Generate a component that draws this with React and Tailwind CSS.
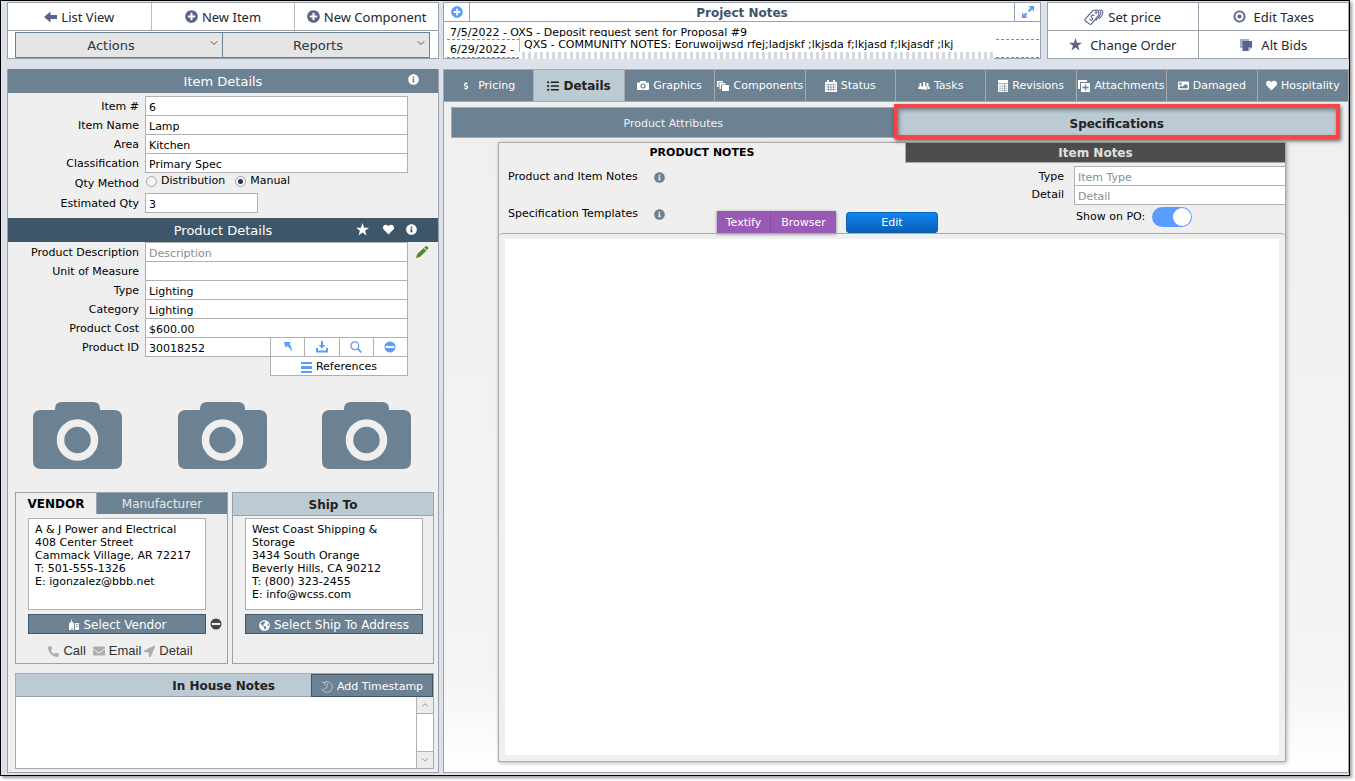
import {
  FaDollarSign,
  FaEnvelope,
  FaGlobeAmericas,
  FaHeart,
  FaImage,
  FaInfoCircle,
  FaListUl,
  FaLocationArrow,
  FaPhoneAlt,
  FaPlusCircle,
} from "react-icons/fa";
import { LuChevronDown, LuChevronUp } from "react-icons/lu";

/* ---------- icons ---------- */

const BackIcon = () => (
  <svg viewBox="0 0 13 12" className="h-3 w-[13px]" fill="#5b628c">
    <path d="M0 6 6.5.5V4H13v4H6.500v3.500z" />
  </svg>
);

const StarIcon = ({ className }) => (
  <svg viewBox="0 0 24 24" className={className} fill="currentColor">
    <path d="M12 0l2.900 8.600H24l-7.300 5.500 2.700 9L12 17.700 4.600 23.100l2.700-9L0 8.600h9.100z" />
  </svg>
);

const MinusIcon = ({ className }) => (
  <svg viewBox="0 0 12 12" className={className} fill="currentColor">
    <path d="M6 .5A5.500 5.500 0 1 1 6 11.500 5.500 5.500 0 0 1 6 .5zM1.800 5v2h8.400V5z" fillRule="evenodd" />
  </svg>
);

const TagsIcon = () => (
  <svg viewBox="0 0 20 18" className="h-[18px] w-5" fill="none" stroke="#5b628c" strokeWidth="1.100" strokeLinejoin="round">
    <path d="M1.200 11.200 8.300 3.100Q9 2.300 10 2.200l3-.2q1.300 0 1.500 1.300l.3 2.600q.1 1-.5 1.800l-6.800 8.200q-.8.900-1.800.2l-4.300-3.100q-1-.8-.2-1.800z" />
    <path d="M14.800 2q1.900.1 2 1.700.2 2.700-1.200 4.300l-3.800 4.600M16.800 1.800q2 .4 2 2 .1 2.600-1.300 4.200l-2.400 2.900" />
    <circle cx="12.200" cy="4.500" r=".8" />
    <path d="M10.200 8q-1.300-1.500-2.500-.6-1 1.100.2 2.200t.2 2.200q-1.200 1-2.500-.6" />
  </svg>
);

const TargetIcon = () => (
  <svg viewBox="0 0 14 14" className="size-[13px]" fill="none">
    <circle cx="7" cy="7" r="5.500" stroke="#5b628c" strokeWidth="2" />
    <circle cx="7" cy="7" r="2.200" fill="#5b628c" />
  </svg>
);

const BidsIcon = () => (
  <svg viewBox="0 0 14 14" className="size-3.5">
    <path d="M1 1h9v9H1z" fill="#a9adc4" />
    <path d="M3.500 3H13v6.500L9.500 13h-6z" fill="#5b628c" />
    <path d="M13 9.500 9.500 13V9.500z" fill="#c5c8d8" />
  </svg>
);

const ExpandIcon = () => (
  <svg viewBox="0 0 14 14" className="size-3.5" fill="#5a9dff">
    <path d="M7.500 1H13v5.500l-1.900-1.900-2.600 2.600-1.700-1.700 2.600-2.600zM6.500 13H1V7.500l1.900 1.900 1.800-1.800 1.700 1.700-1.800 1.800z" />
  </svg>
);

const CameraIcon = () => (
  <svg viewBox="0 0 12 11" className="h-[11px] w-3 shrink-0" fill="currentColor">
    <path d="M3.500 1h5l.7 1.500H11q1 0 1 1V9q0 1-1 1H1Q0 10 0 9V3.500q0-1 1-1h1.800z" />
    <circle cx="6" cy="6" r="2" fill="none" stroke="#6c8192" strokeWidth="1.200" />
  </svg>
);

const UsersIcon = () => (
  <svg viewBox="0 0 12 8" className="h-2 w-3 shrink-0" fill="currentColor">
    <path d="M1.500 1h1.800v3L4.500 5.500V7H0V5.500L1.500 4.500zM5 0h2.200v3.500L9 5v2.500H4V5.500L5 4zM8.500 1h2v3l1.500 1.500V7H9.500V5l-1-1z" />
  </svg>
);

const StackIcon = () => (
  <svg viewBox="0 0 13 12" className="h-3 w-[13px] shrink-0" fill="currentColor">
    <path d="M0 1h6v1.500H1.500V7H0zM2.500 3h6v1.500H4V9H2.500z" />
    <path d="M5 5h7v6H5z" />
  </svg>
);

const CalendarIcon = () => (
  <svg viewBox="0 0 12 12" className="size-3 shrink-0">
    <path d="M0 2h2V0h2v2h4V0h2v2h2v10H0z" fill="currentColor" />
    <path d="M1 4.500h10M1 7h10M1 9.500h10M3.500 4.500V11M6 4.500V11M8.500 4.500V11" stroke="#6c8192" strokeWidth=".6" />
  </svg>
);

const LedgerIcon = () => (
  <svg viewBox="0 0 10 12" className="h-3 w-2.5 shrink-0">
    <path d="M0 0h10v12H0z" fill="currentColor" />
    <path d="M0 3.500h10M1 6h8M1 8.200h8M1 10.400h8M6.500 4v8" stroke="#6c8192" strokeWidth=".6" />
  </svg>
);

const AttachIcon = () => (
  <svg viewBox="0 0 12 12" className="size-3 shrink-0">
    <path d="M0 0h9v2H2v7H0z" fill="currentColor" />
    <path d="M3 3h9v9H3z" fill="currentColor" />
    <path d="M7.500 4.500v6M4.500 7.500h6" stroke="#6c8192" strokeWidth="1.300" />
  </svg>
);

const PencilIcon = () => (
  <svg viewBox="0 0 14 14" className="size-3.5" fill="#4f8a1c">
    <path d="M10.200 1.500q1-.9 2 0l.8.800q.8 1-.1 1.900l-.9.800L9.300 2.400zM8.700 3l2.700 2.700-6.300 6L1 13.200l1.300-4.100z" />
  </svg>
);

const CornerArrowIcon = () => (
  <svg viewBox="0 0 12 12" className="size-3" fill="#5a9dff">
    <path d="M2 1h7L7.500 2.800c1.800 2 2.500 4.700 2.200 8.200C8.800 8.500 7.600 6.700 5.300 5L3.500 6.500z" />
  </svg>
);

const DownloadIcon = () => (
  <svg viewBox="0 0 12 12" className="size-3" fill="#5a9dff">
    <path d="M5 0h2v4h2.500L6 7.500 2.500 4H5zM0 7h2v2.500h8V7h2v4.500H0z" />
  </svg>
);

const SearchIcon = () => (
  <svg viewBox="0 0 12 12" className="size-3" fill="none" stroke="#5a9dff">
    <circle cx="4.800" cy="4.800" r="3.900" strokeWidth="1.300" />
    <path d="m7.800 7.800 3.500 3.500" strokeWidth="1.800" />
  </svg>
);

const BarsIcon = () => (
  <svg viewBox="0 0 11 11" className="size-[11px]" fill="#5a9dff">
    <path d="M0 0h11v2H0zM0 4h11v3H0zM0 9h11v2H0z" />
  </svg>
);

const BuildingIcon = () => (
  <svg viewBox="0 0 12 12" className="size-3" fill="currentColor">
    <path d="M3.500 0v2L6 4.500V11H4.500V9h-1v2H1V4.500L3 2.500V0z" />
    <path d="M7 4h4v7H7zm1 1v1h.8V5zm1.500 0v1h.8V5zM8 7v1h.8V7zm1.500 0v1h.8V7z" fillRule="evenodd" />
  </svg>
);

const ClockIcon = () => (
  <svg viewBox="0 0 12 12" className="size-3" fill="none" stroke="#b9c6cf" strokeWidth="1">
    <path d="M3.500 1.300A5.300 5.300 0 1 1 .9 7.500M6.300 2.500V6L3 8.500M1 1.500h3v3" />
  </svg>
);

const CameraPlaceholder = () => (
  <svg viewBox="0 0 89 67" className="h-[67px] w-[89px]" fill="#6c8192">
    <path d="M8 8h14V7q0-7 7-7h31q7 0 7 7v1h14q8 0 8 8v43q0 8-8 8H8q-8 0-8-8V16q0-8 8-8z" />
    <circle cx="44.500" cy="38" r="17" fill="none" stroke="#efefef" strokeWidth="7.500" />
  </svg>
);

/* ---------- data ---------- */

const tabs = [
  { label: "Pricing", icon: <FaDollarSign className="size-2 shrink-0" />, gap: "gap-2" },
  { label: "Details", icon: <FaListUl className="size-3 shrink-0" />, active: true },
  { label: "Graphics", icon: <CameraIcon /> },
  { label: "Components", icon: <StackIcon /> },
  { label: "Status", icon: <CalendarIcon /> },
  { label: "Tasks", icon: <UsersIcon /> },
  { label: "Revisions", icon: <LedgerIcon /> },
  { label: "Attachments", icon: <AttachIcon /> },
  { label: "Damaged", icon: <FaImage className="size-[11px] shrink-0" /> },
  { label: "Hospitality", icon: <FaHeart className="size-[11px] shrink-0" /> },
];

const itemFields = [
  { id: "item-no", label: "Item #", value: "6" },
  { id: "item-name", label: "Item Name", value: "Lamp" },
  { id: "area", label: "Area", value: "Kitchen" },
  { id: "classification", label: "Classification", value: "Primary Spec" },
];

const productFields = [
  { id: "description", label: "Product Description", value: "", placeholder: "Description" },
  { id: "uom", label: "Unit of Measure", value: "" },
  { id: "type", label: "Type", value: "Lighting" },
  { id: "category", label: "Category", value: "Lighting" },
  { id: "cost", label: "Product Cost", value: "$600.00" },
];

const vendorAddress = `A & J Power and Electrical
408 Center Street
Cammack Village, AR 72217
T: 501-555-1326
E: igonzalez@bbb.net`;

const shipAddress = `West Coast Shipping & Storage
3434 South Orange
Beverly Hills, CA 90212
T: (800) 323-2455
E: info@wcss.com`;

/* ---------- small parts ---------- */

const inputClass =
  "h-5 border border-[#b0b0b0] bg-white px-[3px] pt-0.5 text-[11px] text-black placeholder:text-[#8c8c8c] outline-none";

const FieldRow = ({ id, label, value, placeholder, children }) => (
  <div className="-mb-px flex h-5 items-center">
    <label htmlFor={id} className="w-[131px] shrink-0 pt-0.5 text-right">
      {label}
    </label>
    <input
      id={id}
      defaultValue={value}
      placeholder={placeholder}
      className={`${inputClass} ml-1.5 w-[263px] shrink-0`}
    />
    {children}
  </div>
);

const ToolButton = ({ icon, children }) => (
  <button className="flex items-center justify-center gap-1 bg-white font-['Noto_Sans',sans-serif] text-[13px] text-[#23272e]">
    {icon}
    {children}
  </button>
);

const DropDown = ({ label }) => (
  <div className="relative flex-1">
    <select
      aria-label={label}
      className="h-6 w-full appearance-none bg-[#e5e5e5] pt-0.5 pr-4 text-center text-[13px] text-[#2c3640] outline-none"
    >
      <option>{label}</option>
    </select>
    <LuChevronDown className="pointer-events-none absolute top-1 right-0.5 size-3 text-[#555]" />
  </div>
);

const IconCell = ({ label, children }) => (
  <button
    aria-label={label}
    className="flex h-5 flex-1 items-center justify-center border-y border-r border-[#b0b0b0] bg-white"
  >
    {children}
  </button>
);

/* ---------- sections ---------- */

const LeftToolbar = () => (
  <div className="h-[57px] border border-[#9aa1ab] bg-white">
    <div className="grid h-7 grid-cols-3 gap-px border-b border-[#9aa1ab] bg-[#bcbcbc]">
      <ToolButton icon={<BackIcon />}>List View</ToolButton>
      <ToolButton icon={<FaPlusCircle className="size-[13px] text-[#5b628c]" />}>New Item</ToolButton>
      <ToolButton icon={<FaPlusCircle className="size-[13px] text-[#5b628c]" />}>New Component</ToolButton>
    </div>
    <div className="mt-px mr-2 ml-[7px] flex divide-x divide-[#6c8192] border border-[#6c8192]">
      <DropDown label="Actions" />
      <DropDown label="Reports" />
    </div>
  </div>
);

const ItemDetails = () => (
  <>
    <header className="relative flex h-6 items-center justify-center bg-[#6c8192] pt-0.5 text-[13px] text-white">
      <h2>Item Details</h2>
      <button aria-label="Item details info" className="absolute top-[5px] right-[19px]">
        <FaInfoCircle className="size-[11px]" />
      </button>
    </header>
    <div className="pt-[3px] pb-[5px]">
      {itemFields.map((field) => (
        <FieldRow key={field.id} {...field} />
      ))}
      <fieldset className="mt-px flex h-5 items-center">
        <legend className="float-left w-[131px] pt-0.5 text-right">Qty Method</legend>
        <div className="ml-[7px] flex gap-2.5 pb-1">
          <label className="flex items-center gap-1">
            <input
              type="radio"
              name="qty"
              className="size-[11px] appearance-none rounded-full border border-[#a5a5a5] bg-[#f4f4f4]"
            />
            Distribution
          </label>
          <label className="flex items-center gap-1">
            <input
              type="radio"
              name="qty"
              defaultChecked
              className="size-[11px] appearance-none rounded-full border border-[#a5a5a5] bg-[radial-gradient(circle,#24364b_2px,#f4f4f4_3px)]"
            />
            Manual
          </label>
        </div>
      </fieldset>
      <div className="flex h-5 items-center">
        <label htmlFor="est-qty" className="w-[131px] pt-0.5 text-right">
          Estimated Qty
        </label>
        <input id="est-qty" defaultValue="3" className={`${inputClass} ml-1.5 w-[113px]`} />
      </div>
    </div>
  </>
);

const ProductDetails = () => (
  <>
    <header className="relative flex h-6 items-center justify-center bg-[#3e566a] pt-0.5 text-[13px] text-white">
      <h2>Product Details</h2>
      <div className="absolute top-[5px] right-[21px] flex items-center gap-3">
        <button aria-label="Favorite">
          <StarIcon className="size-[13px]" />
        </button>
        <button aria-label="Like" className="ml-0.5">
          <FaHeart className="size-[11px]" />
        </button>
        <button aria-label="Product details info">
          <FaInfoCircle className="size-[11px]" />
        </button>
      </div>
    </header>
    {productFields.map((field) => (
      <FieldRow key={field.id} {...field}>
        {field.id === "description" && (
          <button aria-label="Edit description" className="ml-[7px]">
            <PencilIcon />
          </button>
        )}
      </FieldRow>
    ))}
    <div className="flex h-5 items-center">
      <label htmlFor="product-id" className="w-[131px] pt-0.5 text-right">
        Product ID
      </label>
      <input id="product-id" defaultValue="30018252" className={`${inputClass} ml-1.5 w-[126px]`} />
      <div className="flex w-[137px]">
        <IconCell label="Go to product">
          <CornerArrowIcon />
        </IconCell>
        <IconCell label="Import product">
          <DownloadIcon />
        </IconCell>
        <IconCell label="Search product">
          <SearchIcon />
        </IconCell>
        <IconCell label="Remove product">
          <MinusIcon className="size-3 text-[#5a9dff]" />
        </IconCell>
      </div>
    </div>
    <button className="-mt-px ml-[262px] flex h-5 w-[138px] items-center justify-center gap-1 border border-[#b0b0b0] bg-white pt-0.5">
      <BarsIcon />
      References
    </button>
  </>
);

const AddressBox = ({ label, value }) => (
  <textarea
    aria-label={label}
    readOnly
    value={value}
    className="block h-[92px] w-[178px] resize-none border border-[#b0b0b0] bg-white px-1.5 pt-1 text-[11px] leading-[13px] outline-none"
  />
);

const Contacts = () => (
  <div className="mt-[23px] flex gap-1 pr-1 pl-[7px]">
    <section className="h-[172px] w-[213px] border border-[#9aa1ab]">
      <div className="flex h-[21px]">
        <button className="w-20 text-[12px] font-bold">VENDOR</button>
        <button className="flex-1 border-l border-[#9aa1ab] bg-[#6c8192] text-[12px] text-[#e4e9ec]">
          Manufacturer
        </button>
      </div>
      <div className="mt-1 ml-3">
        <AddressBox label="Vendor address" value={vendorAddress} />
        <div className="mt-1 flex items-center gap-1">
          <button className="flex h-5 w-[178px] items-center justify-center gap-1 border border-[#3e566a] bg-[#6c8192] pt-0.5 text-[12px] text-white">
            <BuildingIcon />
            Select Vendor
          </button>
          <button aria-label="Clear vendor">
            <MinusIcon className="size-3 text-[#444]" />
          </button>
        </div>
        <div className="mt-2.5 flex justify-center gap-[7px] pr-3.5 font-['Liberation_Sans',Arial,sans-serif] text-[13px] text-[#333]">
          <a href="#call" className="flex items-center gap-1">
            <FaPhoneAlt className="size-[11px] text-[#adadad]" />
            Call
          </a>
          <a href="#email" className="flex items-center gap-1">
            <FaEnvelope className="size-3 text-[#adadad]" />
            Email
          </a>
          <a href="#detail" className="-ml-1 flex items-center gap-1">
            <FaLocationArrow className="size-[11px] text-[#adadad]" />
            Detail
          </a>
        </div>
      </div>
    </section>
    <section className="h-[172px] flex-1 border border-[#9aa1ab]">
      <h3 className="flex h-[23px] items-center justify-center border-b border-[#9aa1ab] bg-[#bccbd3] pt-0.5 text-[12px] font-bold text-[#222]">
        Ship To
      </h3>
      <div className="mt-0.5 ml-3">
        <AddressBox label="Ship to address" value={shipAddress} />
        <button className="mt-1 flex h-5 w-[178px] items-center justify-center gap-1 border border-[#3e566a] bg-[#6c8192] pt-0.5 text-[12px] text-white">
          <FaGlobeAmericas className="size-[11px]" />
          Select Ship To Address
        </button>
      </div>
    </section>
  </div>
);

const InHouseNotes = () => (
  <section className="mt-[9px] mr-1 mb-[3px] ml-[7px] border border-[#aaa]">
    <div className="flex h-[23px] bg-[#bccbd3]">
      <h3 className="flex flex-1 items-center justify-end border-b border-[#9aa1ab] pt-0.5 pr-9 text-[12px] font-bold text-[#222]">
        In House Notes
      </h3>
      <button className="flex w-[122px] items-center justify-center gap-1 border border-[#3e566a] bg-[#6c8192] pt-0.5 text-[11px] text-white">
        <ClockIcon />
        Add Timestamp
      </button>
    </div>
    <div className="flex h-[71px] bg-white">
      <textarea aria-label="In House Notes" className="flex-1 resize-none p-1 outline-none" />
      <div className="flex w-[17px] flex-col justify-between border-l border-[#b0b0b0]">
        <button aria-label="Scroll up" className="flex h-[17px] items-center justify-center border-b border-[#b0b0b0] bg-[#ececec]">
          <LuChevronUp className="size-2.5 text-[#888]" />
        </button>
        <button aria-label="Scroll down" className="flex h-[17px] items-center justify-center border-t border-[#b0b0b0] bg-[#ececec]">
          <LuChevronDown className="size-2.5 text-[#888]" />
        </button>
      </div>
    </div>
  </section>
);

const ProjectNotes = () => (
  <section className="relative h-[57px] flex-1 border border-[#9aa1ab] bg-white text-[11px]">
    <div className="flex h-[19px] border-b border-[#9aa1ab]">
      <button aria-label="Add note" className="flex w-[26px] items-center justify-center border-r border-[#9aa1ab]">
        <FaPlusCircle className="size-3 text-[#5a9dff]" />
      </button>
      <h2 className="flex flex-1 items-center justify-center pt-0.5 text-[12px] font-bold text-[#3e566a]">
        Project Notes
      </h2>
      <button aria-label="Expand notes" className="flex w-[26px] items-center justify-center border-l border-[#9aa1ab]">
        <ExpandIcon />
      </button>
    </div>
    <p className="mr-px ml-[3px] h-[18px] overflow-hidden border-b border-dashed border-[#888] pt-1 pl-[3px] leading-[14px]">
      7/5/2022 - OXS - Deposit request sent for Proposal #9
    </p>
    <p className="mr-px ml-[3px] h-[18px] overflow-hidden border-b border-dashed border-[#888] pl-[3px] leading-5">
      6/29/2022 -
    </p>
    {/* note preview floating above the list */}
    <div className="absolute top-[34px] right-[46px] left-[75px]">
      <p className="h-[15px] overflow-hidden border-l border-[#bbb] bg-white pl-1 leading-[15px] whitespace-nowrap">
        QXS - COMMUNITY NOTES: Eoruwoijwsd rfej;ladjskf ;lkjsda f;lkjasd f;lkjasdf ;lkj
      </p>
      <div className="h-[7px] bg-[repeating-linear-gradient(90deg,#fff_0_3px,#d5d8df_3px_6px)]" />
    </div>
  </section>
);

const ActionGrid = () => (
  <div className="grid h-[57px] w-[302px] grid-cols-2 grid-rows-2 gap-px border border-[#9aa1ab] bg-[#9aa1ab]">
    <ToolButton icon={<TagsIcon />}>Set price</ToolButton>
    <ToolButton icon={<TargetIcon />}>
      <span className="ml-1">Edit Taxes</span>
    </ToolButton>
    <ToolButton icon={<StarIcon className="size-[13px] text-[#5b628c]" />}>
      <span className="ml-1">Change Order</span>
    </ToolButton>
    <ToolButton icon={<BidsIcon />}>
      <span className="ml-1">Alt Bids</span>
    </ToolButton>
  </div>
);

const TabBar = () => (
  <nav className="grid h-[33px] grid-cols-10 divide-x divide-[#aaa] border border-[#aaa]">
    {tabs.map((tab) => (
      <button
        key={tab.label}
        className={`flex min-w-0 items-center justify-center whitespace-nowrap ${tab.gap ?? "gap-1"} ${
          tab.active ? "bg-[#bccbd3] text-[12px] font-bold text-[#222]" : "bg-[#6c8192] text-[11px] text-white"
        }`}
      >
        {tab.icon}
        {tab.label}
      </button>
    ))}
  </nav>
);

const NotesCard = () => (
  <section className="mt-1 mr-[62px] mb-2.5 ml-[54px] flex flex-1 flex-col border border-[#aaa] bg-[#efefef] shadow-[1px_1px_4px_rgba(0,0,0,0.3)]">
    <div className="flex h-[90px]">
      <div className="flex flex-1 flex-col">
        <h3 className="mt-[3px] text-center text-[11px] leading-[14px] font-bold">PRODUCT NOTES</h3>
        <div className="mt-2.5 ml-[9px] flex items-center gap-4">
          Product and Item Notes
          <FaInfoCircle className="size-[11px] text-[#6c8192]" />
        </div>
        <div className="mt-auto flex items-end">
          <div className="mb-3 ml-[9px] flex items-center gap-4">
            Specification Templates
            <FaInfoCircle className="size-[11px] text-[#6c8192]" />
          </div>
          <div className="ml-auto flex h-[22px] divide-x divide-[#8a4ba6] bg-[#9b59b6] pt-px text-[11px] text-white shadow-[0_1px_3px_rgba(0,0,0,0.5)]">
            <button className="w-[54px]">Textify</button>
            <button className="w-[65px]">Browser</button>
          </div>
          <button className="mr-[-33px] ml-2.5 h-[21px] w-[92px] rounded-[3px] border border-[#0a5fb0] bg-linear-to-b from-[#0f85f5] to-[#0a60b3] text-[11px] text-white">
            Edit
          </button>
        </div>
      </div>
      <div className="w-[380px]">
        <h3 className="flex h-5 items-center justify-center border-b border-l border-[#aaa] bg-[#4d4d4d] text-[12px] font-bold text-[#e0e0e0]">
          Item Notes
        </h3>
        <div className="mt-[3px] flex h-5 items-center">
          <label htmlFor="note-type" className="w-[159px] pt-0.5 text-right">
            Type
          </label>
          <input id="note-type" placeholder="Item Type" className={`${inputClass} ml-2.5 min-w-0 flex-1 border-r-0`} />
        </div>
        <div className="-mt-px flex h-5 items-center">
          <label htmlFor="note-detail" className="w-[159px] text-right">
            Detail
          </label>
          <input id="note-detail" placeholder="Detail" className={`${inputClass} ml-2.5 min-w-0 flex-1 border-r-0`} />
        </div>
        <label className="mt-0.5 ml-[171px] flex items-center gap-[7px]">
          Show on PO:
          <input
            type="checkbox"
            defaultChecked
            className="relative h-5 w-10 appearance-none rounded-full bg-[#5a9dff] before:absolute before:top-px before:right-px before:size-[18px] before:rounded-full before:bg-white"
          />
        </label>
      </div>
    </div>
    <div className="flex flex-1 rounded-t-sm border-t border-[#aaa] px-1.5 pt-[5px] pb-1.5">
      <textarea aria-label="Product notes" className="flex-1 resize-none bg-white p-2 outline-none" />
    </div>
  </section>
);

export default function App() {
  return (
    <div className="pr-[5px] pb-1 font-['DejaVu_Sans',Verdana,sans-serif] text-[11px] leading-[14px] text-black">
      <div className="flex gap-1 border border-black bg-[#dde2ea] pt-px pb-0.5 pl-1.5 shadow-[2px_2px_3px_rgba(0,0,0,0.4)]">
        <aside className="flex w-[432px] shrink-0 flex-col gap-2.5">
          <LeftToolbar />
          <div className="border-x border-b border-[#9aa1ab] bg-[#efefef]">
            <ItemDetails />
            <ProductDetails />
            <div className="mt-[26px] flex justify-between pr-[27px] pl-[25px]">
              <CameraPlaceholder />
              <CameraPlaceholder />
              <CameraPlaceholder />
            </div>
            <Contacts />
            <InHouseNotes />
          </div>
        </aside>
        <main className="flex min-w-0 flex-1 flex-col">
          <div className="mb-2.5 flex gap-1.5">
            <ProjectNotes />
            <ActionGrid />
          </div>
          <TabBar />
          <div className="flex flex-1 flex-col border-x border-b border-[#9aa1ab] bg-[linear-gradient(#efefef,#f4f4f4_85%,#fff)] pt-[5px]">
            <div className="mr-2.5 ml-[7px] flex h-[31px]">
              <button className="flex-1 border border-[#aaa] bg-[#6c8192] pt-0.5 text-[11px] text-[#eef2f4]">
                Product Attributes
              </button>
              <button className="relative flex-1 bg-[#bccbd3] pt-0.5 text-[12px] font-bold text-[#222]">
                Specifications
                <span className="absolute -inset-x-0.5 -top-[3px] -bottom-px border-4 border-[#fb4445] shadow-[1px_2px_4px_rgba(0,0,0,0.6),inset_1px_2px_4px_rgba(0,0,0,0.4)]" />
              </button>
            </div>
            <NotesCard />
          </div>
        </main>
      </div>
    </div>
  );
}
